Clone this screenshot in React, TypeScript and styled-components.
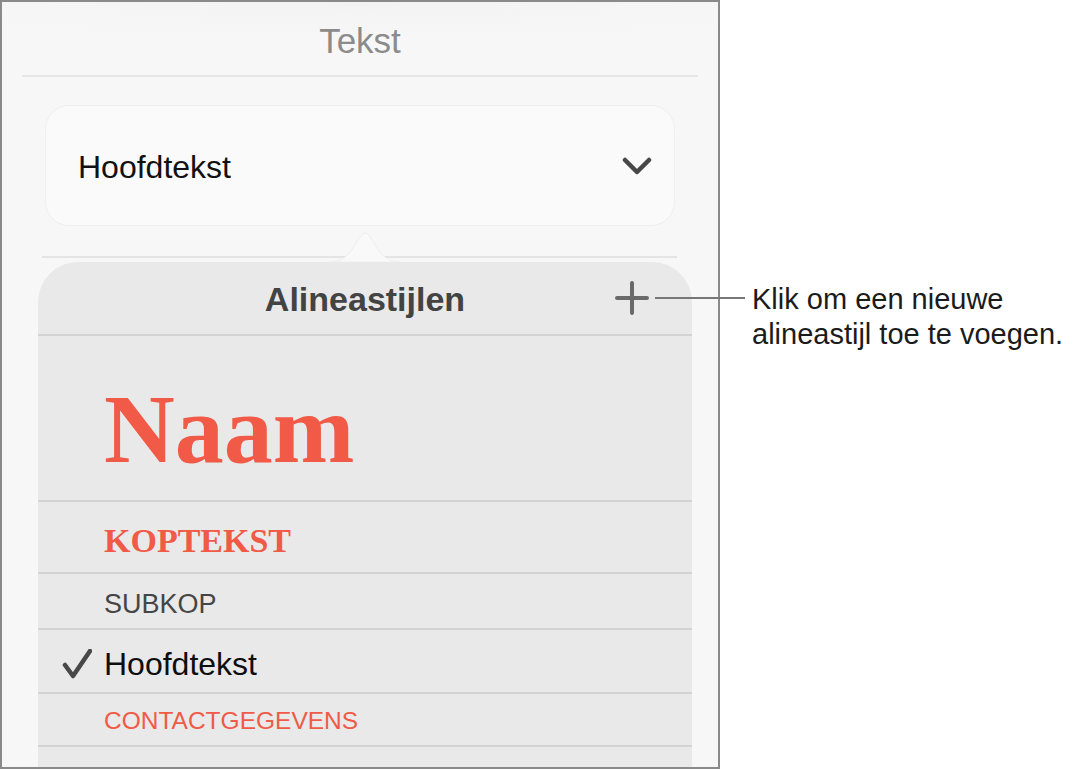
import styled, { createGlobalStyle } from "styled-components";

const GlobalStyle = createGlobalStyle`
  html, body {
    margin: 0;
    padding: 0;
    background: #ffffff;
    overflow: hidden;
  }
  body {
    font-family: "Liberation Sans", Arial, sans-serif;
  }
`;

type Style = {
  label: string;
  kind: "naam" | "kop" | "sub" | "body" | "contact" | "empty";
  checked?: boolean;
};

const styles: Style[] = [
  { label: "Naam", kind: "naam" },
  { label: "KOPTEKST", kind: "kop" },
  { label: "SUBKOP", kind: "sub" },
  { label: "Hoofdtekst", kind: "body", checked: true },
  { label: "CONTACTGEGEVENS", kind: "contact" },
  { label: "", kind: "empty" },
];

const ChevronIcon = () => (
  <svg width="30" height="20" viewBox="0 0 30 20" fill="none">
    <path
      d="M3 4 L15 16 L27 4"
      stroke="#474747"
      strokeWidth="4.5"
      strokeLinecap="round"
      strokeLinejoin="round"
    />
  </svg>
);

const PlusIcon = () => (
  <svg width="34" height="34" viewBox="0 0 34 34" fill="none">
    <path
      d="M17 2 V32 M2 17 H32"
      stroke="#6a6a6a"
      strokeWidth="4"
      strokeLinecap="round"
    />
  </svg>
);

const CheckIcon = () => (
  <svg width="30" height="30" viewBox="0 0 30 30" fill="none">
    <path
      d="M3 16 L11 27 L28 2"
      stroke="#484848"
      strokeWidth="4.5"
      strokeLinecap="round"
      strokeLinejoin="round"
    />
  </svg>
);

const App = () => {
  return (
    <>
      <GlobalStyle />
      <Page>
        <Frame>
          <Header>Tekst</Header>
          <Select>
            <span>Hoofdtekst</span>
            <ChevronIcon />
          </Select>
          <Gap>
            <GapLine />
            <Arrow width="72" height="30" viewBox="0 0 72 30">
              <path
                d="M0 30 C14 30 20 23 27 11 C31 4 34 1 36 1 C38 1 41 4 45 11 C52 23 58 30 72 30 Z"
                fill="#f9f9f9"
                stroke="#eeeeee"
                strokeWidth="1"
              />
            </Arrow>
          </Gap>
          <Popover>
            <PopHeader>
              <PopTitle>Alineastijlen</PopTitle>
              <AddButton>
                <PlusIcon />
              </AddButton>
            </PopHeader>
            {styles.map((s, i) => (
              <Row key={i} $kind={s.kind}>
                <CheckSlot>{s.checked && <CheckIcon />}</CheckSlot>
                <RowLabel $kind={s.kind}>{s.label}</RowLabel>
              </Row>
            ))}
          </Popover>
        </Frame>
        <Callout>
          <CalloutLine />
          Klik om een nieuwe
          <br />
          alineastijl toe te voegen.
        </Callout>
      </Page>
    </>
  );
};

// #region styled-components

const Page = styled.div`
  display: flex;
  align-items: flex-start;
  width: 1075px;
  height: 769px;
`;

const Frame = styled.div`
  position: relative;
  box-sizing: border-box;
  width: 720px;
  height: 769px;
  flex-shrink: 0;
  border: 2px solid #8a8a8a;
  background: radial-gradient(
      ellipse 70% 40px at 50% 0,
      #f3f3f3 0%,
      rgba(247, 247, 247, 0) 100%
    ),
    #f7f7f7;
  overflow: hidden;
  display: flex;
  flex-direction: column;
  > * {
    flex-shrink: 0;
  }
`;

const Header = styled.div`
  margin: 0 20px;
  padding-top: 4px;
  line-height: 69px;
  height: 69px;
  border-bottom: 2px solid #e6e6e6;
  text-align: center;
  font-size: 35px;
  color: #8b8b8b;
`;

const Select = styled.div`
  box-sizing: border-box;
  margin: 28px 43px 0 43px;
  height: 121px;
  padding: 0 22px 0 32px;
  border: 1px solid #efefef;
  border-radius: 24px;
  background: #fafafa;
  display: flex;
  align-items: center;
  justify-content: space-between;
  span {
    font-size: 32px;
    color: #111111;
    padding-top: 4px;
  }
`;

const Gap = styled.div`
  position: relative;
  height: 36px;
  box-sizing: border-box;
  padding: 0 41px 4px 40px;
  display: flex;
  align-items: flex-end;
`;

const GapLine = styled.div`
  flex: 1;
  height: 2px;
  background: #e4e4e4;
`;

const Arrow = styled.svg`
  position: absolute;
  left: 327px;
  top: 6px;
`;

const Popover = styled.div`
  margin-left: 36px;
  width: 654px;
  flex: 1 0 auto;
  background: #e9e9e9;
  border-radius: 40px 40px 0 0;
  display: flex;
  flex-direction: column;
  > * {
    flex-shrink: 0;
  }
`;

const PopHeader = styled.div`
  position: relative;
  height: 72px;
  border-bottom: 2px solid #d3d3d3;
  display: flex;
  align-items: center;
  justify-content: center;
`;

const PopTitle = styled.div`
  font-size: 34px;
  font-weight: 700;
  color: #434343;
  padding-top: 2px;
`;

const AddButton = styled.div`
  position: absolute;
  right: 43px;
  top: 19px;
  display: flex;
`;

const rowSizes = {
  naam: { height: 164, pad: 22 },
  kop: { height: 70, pad: 7 },
  sub: { height: 54, pad: 7 },
  body: { height: 62, pad: 5 },
  contact: { height: 51, pad: 4 },
  empty: { height: 51, pad: 0 },
};

const Row = styled.div<{ $kind: Style["kind"] }>`
  box-sizing: border-box;
  height: ${(p) => rowSizes[p.$kind].height + 2}px;
  padding: ${(p) => rowSizes[p.$kind].pad}px 0 0 24px;
  border-bottom: 2px solid #d3d3d3;
  display: flex;
  align-items: center;
  gap: 12px;
`;

const CheckSlot = styled.div`
  width: 30px;
  height: 30px;
  display: flex;
  align-items: center;
  justify-content: center;
`;

const RowLabel = styled.div<{ $kind: Style["kind"] }>`
  line-height: 1;
  white-space: nowrap;
  ${(p) => {
    switch (p.$kind) {
      case "naam":
        return `
          font-family: "Liberation Serif", "Times New Roman", serif;
          font-weight: 700;
          font-size: 98px;
          color: #f05a46;
        `;
      case "kop":
        return `
          font-family: "Liberation Serif", "Times New Roman", serif;
          font-weight: 700;
          font-size: 34px;
          color: #f05a46;
        `;
      case "sub":
        return `
          font-size: 27px;
          color: #454545;
        `;
      case "body":
        return `
          font-size: 32px;
          color: #0e0e0e;
        `;
      case "contact":
        return `
          font-size: 24.5px;
          color: #f05a46;
        `;
      default:
        return ``;
    }
  }}
`;

const Callout = styled.div`
  position: relative;
  margin: 282px 0 0 32px;
  font-size: 29px;
  line-height: 35px;
  color: #1b1b1b;
  white-space: nowrap;
`;

const CalloutLine = styled.div`
  position: absolute;
  left: -97px;
  top: 15px;
  width: 90px;
  height: 2px;
  background: #777777;
`;

// #endregion

export default App;
